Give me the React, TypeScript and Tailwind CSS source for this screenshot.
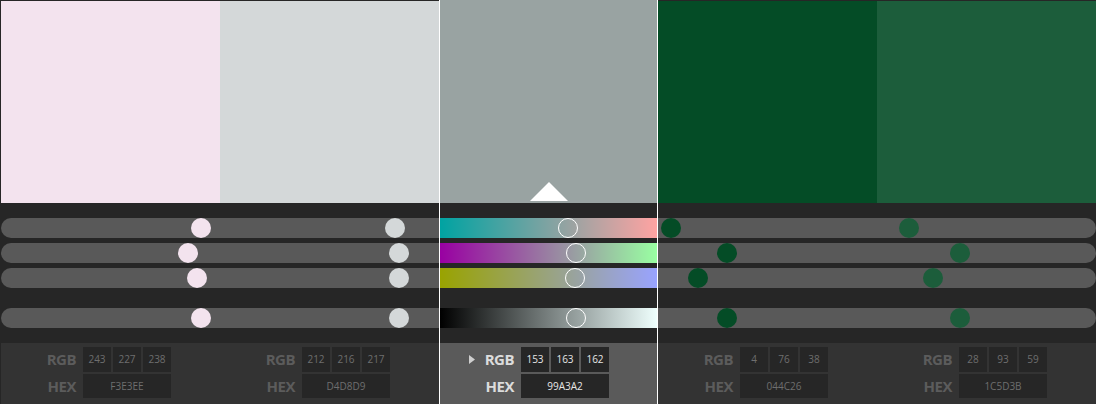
import { CSSProperties } from 'react';

type Swatch = { hex: string; rgb: [number, number, number] };

const swatches: Swatch[] = [
  { hex: 'F3E3EE', rgb: [243, 227, 238] },
  { hex: 'D4D8D9', rgb: [212, 216, 217] },
  { hex: '99A3A2', rgb: [153, 163, 162] },
  { hex: '044C26', rgb: [4, 76, 38] },
  { hex: '1C5D3B', rgb: [28, 93, 59] },
];

const SELECTED = 2;

function thumbLeft(v: number, track: number): CSSProperties {
  return { left: `${(v / 255) * (track - 20)}px` };
}

function gradients(rgb: [number, number, number]) {
  const [r, g, b] = rgb;
  const max = Math.max(r, g, b) || 1;
  const top = rgb.map((c) => Math.round((c / max) * 255));
  return [
    `linear-gradient(to right, rgb(0,${g},${b}), rgb(255,${g},${b}))`,
    `linear-gradient(to right, rgb(${r},0,${b}), rgb(${r},255,${b}))`,
    `linear-gradient(to right, rgb(${r},${g},0), rgb(${r},${g},255))`,
    `linear-gradient(to right, rgb(0,0,0), rgb(${top[0]},${top[1]},${top[2]}))`,
  ];
}

function Panel({ s, active }: { s: Swatch; active: boolean }) {
  return (
    <div className={active ? 'h-[61px] bg-[#5a5a5a] pt-[4px]' : 'h-[61px] bg-[#333333] pt-[4px]'}>
      <div className="flex h-[25px] items-stretch">
        <div
          className={
            active
              ? 'w-[81px] pr-[7px] flex items-center justify-end gap-[10px] text-[15px] font-bold tracking-[-0.5px] text-[#dcdcdc]'
              : 'w-[82px] pr-[7px] flex items-center justify-end text-[15px] font-bold tracking-[-0.5px] text-[#5c5c5c]'
          }
        >
          {active && (
            <svg width="6" height="9" viewBox="0 0 6 9">
              <path d="M0 0 L6 4.5 L0 9 Z" fill="#cfcfcf" />
            </svg>
          )}
          <span>RGB</span>
        </div>
        <div className="flex gap-[2px]">
          {s.rgb.map((v, i) => (
            <div
              key={i}
              className={
                active
                  ? 'w-[28px] bg-[#262626] flex items-center justify-center text-[10px] text-[#e6e6e6]'
                  : 'w-[28px] bg-[#262626] flex items-center justify-center text-[10px] text-[#6e6e6e]'
              }
            >
              {v}
            </div>
          ))}
        </div>
      </div>
      <div className="flex h-[24px] mt-[2px] items-stretch">
        <div
          className={
            active
              ? 'w-[81px] pr-[7px] flex items-center justify-end text-[15px] font-bold tracking-[-0.5px] text-[#dcdcdc]'
              : 'w-[82px] pr-[7px] flex items-center justify-end text-[15px] font-bold tracking-[-0.5px] text-[#5c5c5c]'
          }
        >
          HEX
        </div>
        <div
          className={
            active
              ? 'w-[88px] bg-[#262626] flex items-center justify-center text-[10px] text-[#e6e6e6]'
              : 'w-[88px] bg-[#262626] flex items-center justify-center text-[10px] text-[#6e6e6e]'
          }
        >
          {s.hex}
        </div>
      </div>
    </div>
  );
}

function Column({ s, index }: { s: Swatch; index: number }) {
  const values = [...s.rgb, Math.max(...s.rgb)];
  const rowGaps = ['mt-[15px]', 'mt-[5px]', 'mt-[5px]', 'mt-[20px]'];
  const trackShape =
    index === 0 ? 'rounded-l-full' : index === swatches.length - 1 ? 'rounded-r-full' : '';

  return (
    <div className="w-[219px] shrink-0 flex flex-col border-t border-[#262626]">
      <div className="h-[202px]" style={{ backgroundColor: `#${s.hex}` }} />
      <div className="flex-1 bg-[#262626] flex flex-col">
        {values.map((v, i) => (
          <div key={i} className={`${rowGaps[i]} h-[20px] relative bg-[#595959] ${trackShape}`}>
            <div
              className="absolute top-0 w-[20px] h-[20px] rounded-full"
              style={{ ...thumbLeft(v, 219), backgroundColor: `#${s.hex}` }}
            />
          </div>
        ))}
      </div>
      <Panel s={s} active={false} />
    </div>
  );
}

function SelectedColumn({ s }: { s: Swatch }) {
  const values = [...s.rgb, Math.max(...s.rgb)];
  const grads = gradients(s.rgb);
  const rowGaps = ['mt-[15px]', 'mt-[5px]', 'mt-[5px]', 'mt-[20px]'];

  return (
    <div className="w-[219px] shrink-0 flex flex-col border-x border-white">
      <div className="h-[203px] relative flex justify-center items-end pb-[2px]" style={{ backgroundColor: `#${s.hex}` }}>
        <div className="w-0 h-0 border-x-[19px] border-x-transparent border-b-[19px] border-b-white" />
      </div>
      <div className="flex-1 bg-[#262626] flex flex-col">
        {values.map((v, i) => (
          <div key={i} className={`${rowGaps[i]} h-[20px] relative`} style={{ backgroundImage: grads[i] }}>
            <div
              className="absolute top-0 w-[20px] h-[20px] rounded-full border border-white"
              style={thumbLeft(v, 217)}
            />
          </div>
        ))}
      </div>
      <Panel s={s} active />
    </div>
  );
}

export default function App() {
  return (
    <div className="w-[1096px] h-[404px] overflow-hidden flex bg-[#262626] border-l border-[#262626] font-['Open_Sans','Noto_Sans',sans-serif]">
      {swatches.map((s, i) =>
        i === SELECTED ? <SelectedColumn key={i} s={s} /> : <Column key={i} s={s} index={i} />
      )}
    </div>
  );
}
